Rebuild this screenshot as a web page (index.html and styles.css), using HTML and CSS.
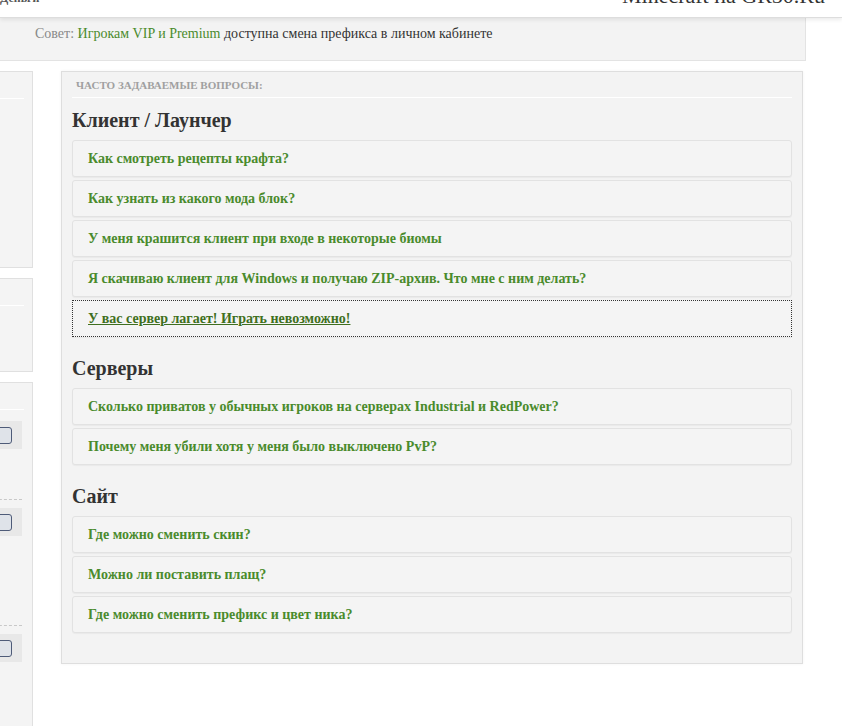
FILE: index.html
```html
<!DOCTYPE html>
<html lang="ru">
<head>
  <meta charset="UTF-8" />
  <meta name="viewport" content="width=device-width, initial-scale=1.0" />
  <title>Частые вопросы - Minecraft на GR50.Ru</title>
  <link rel="stylesheet" href="styles.css">
</head>
<body>

  <header class="topbar">
    <div class="topbar-left">Деньги</div>
    <div class="topbar-brand">Minecraft на GR50.Ru</div>
  </header>

  <div class="tip">
    <span class="tip-label">Совет:</span>
    <a href="#">Игрокам VIP и Premium</a> доступна смена префикса в личном кабинете
  </div>

  <div class="page">
    <aside class="sidebar">
      <div class="side-box side-box-tall">
        <div class="side-head"></div>
      </div>
      <div class="side-box side-box-short">
        <div class="side-head"></div>
      </div>
      <div class="side-box side-box-rest">
        <div class="side-head"></div>
        <div class="side-row"><span class="side-btn"></span></div>
        <div class="side-sep"></div>
        <div class="side-row"><span class="side-btn"></span></div>
        <div class="side-sep side-sep-wide"></div>
        <div class="side-row"><span class="side-btn"></span></div>
      </div>
    </aside>

    <main class="faq">
      <div class="faq-title">Часто задаваемые вопросы:</div>

      <h3 class="faq-group first">Клиент / Лаунчер</h3>
      <a class="faq-item" href="#">Как смотреть рецепты крафта?</a>
      <a class="faq-item" href="#">Как узнать из какого мода блок?</a>
      <a class="faq-item" href="#">У меня крашится клиент при входе в некоторые биомы</a>
      <a class="faq-item" href="#">Я скачиваю клиент для Windows и получаю ZIP-архив. Что мне с ним делать?</a>
      <a class="faq-item active" href="#">У вас сервер лагает! Играть невозможно!</a>

      <h3 class="faq-group">Серверы</h3>
      <a class="faq-item" href="#">Сколько приватов у обычных игроков на серверах Industrial и RedPower?</a>
      <a class="faq-item" href="#">Почему меня убили хотя у меня было выключено PvP?</a>

      <h3 class="faq-group">Сайт</h3>
      <a class="faq-item" href="#">Где можно сменить скин?</a>
      <a class="faq-item" href="#">Можно ли поставить плащ?</a>
      <a class="faq-item" href="#">Где можно сменить префикс и цвет ника?</a>
    </main>
  </div>

</body>
</html>
```

FILE: styles.css
```css
body {
  font-family: 'Liberation Serif', serif;
  margin: 0;
  background: #fff;
  color: #333;
  overflow: hidden;
}
a {
  text-decoration: none;
}

/* верхняя панель, прокручена почти целиком */
.topbar {
  height: 17px;
  overflow: hidden;
  display: flex;
  justify-content: space-between;
  align-items: flex-end;
  background: #fff;
  border-bottom: 1px solid #ddd;
  box-shadow: 0 2px 4px rgba(0,0,0,0.08);
  position: relative;
  z-index: 2;
}
.topbar-left {
  font-size: 12px;
  font-weight: bold;
  line-height: 12px;
  margin-bottom: 13px;
  color: #555;
}
.topbar-brand {
  font-size: 22px;
  line-height: 22px;
  margin: 0 17px 10px 0;
  color: #333;
}

/* совет */
.tip {
  width: 770px;
  height: 42px;
  line-height: 32px;
  padding-left: 35px;
  background: #f3f3f3;
  border-right: 1px solid #e3e3e3;
  border-bottom: 1px solid #e3e3e3;
  font-size: 14px;
  color: #333;
}
.tip-label {
  color: #888;
}
.tip a {
  color: #4a8b2c;
}

.page {
  display: flex;
  align-items: flex-start;
  margin-top: 10px;
  gap: 28px;
}

/* левая колонка */
.sidebar {
  width: 200px;
  margin-left: -167px;
  display: flex;
  flex-direction: column;
  gap: 10px;
}
.side-box {
  background: #f4f4f4;
  border: 1px solid #e0e0e0;
  padding: 0 8px 0 9px;
}
.side-box-tall { height: 195px; }
.side-box-short { height: 92px; }
.side-box-rest { height: 360px; }
.side-head {
  height: 26px;
  border-bottom: 1px solid #fff;
}
.side-row {
  margin: 11px 2px 0 0;
  height: 28px;
  background: #e8e8e8;
  display: flex;
  align-items: center;
  justify-content: flex-end;
  padding-right: 10px;
}
.side-btn {
  width: 60px;
  height: 15px;
  border: 1px solid #4e5b78;
  border-radius: 3px;
  background: #dfe3e9;
}
.side-sep {
  margin: 50px 2px 0 0;
  border-top: 1px dashed #c8c8c8;
}
.side-sep-wide {
  margin-top: 89px;
}
.side-sep + .side-row {
  margin-top: 8px;
}

/* вопросы */
.faq {
  width: 720px;
  background: #f3f3f3;
  border: 1px solid #dedede;
  box-shadow: 0 0 3px rgba(0,0,0,0.05);
  padding: 0 10px 27px;
}
.faq-title {
  padding: 6px 4px 5px;
  line-height: 14px;
  font-size: 11px;
  font-weight: bold;
  text-transform: uppercase;
  color: #a0a0a0;
  border-bottom: 1px solid #fff;
}
.faq-group {
  margin: 19px 0 8px;
  font-size: 20px;
  line-height: 24px;
  color: #333;
}
.faq-group.first {
  margin-top: 10px;
}
.faq-item {
  display: block;
  height: 35px;
  line-height: 35px;
  margin-bottom: 3px;
  padding-left: 15px;
  border: 1px solid #e2e2e2;
  border-radius: 3px;
  box-shadow: 0 1px 1px rgba(0,0,0,0.04);
  background: #f4f4f4;
  font-size: 14px;
  font-weight: bold;
  color: #4a8b2c;
}
.faq-item:hover,
.faq-item.active {
  color: #3f6f20;
  text-decoration: underline;
}
.faq-item.active {
  border: 1px dotted #333;
  border-radius: 0;
}
```
